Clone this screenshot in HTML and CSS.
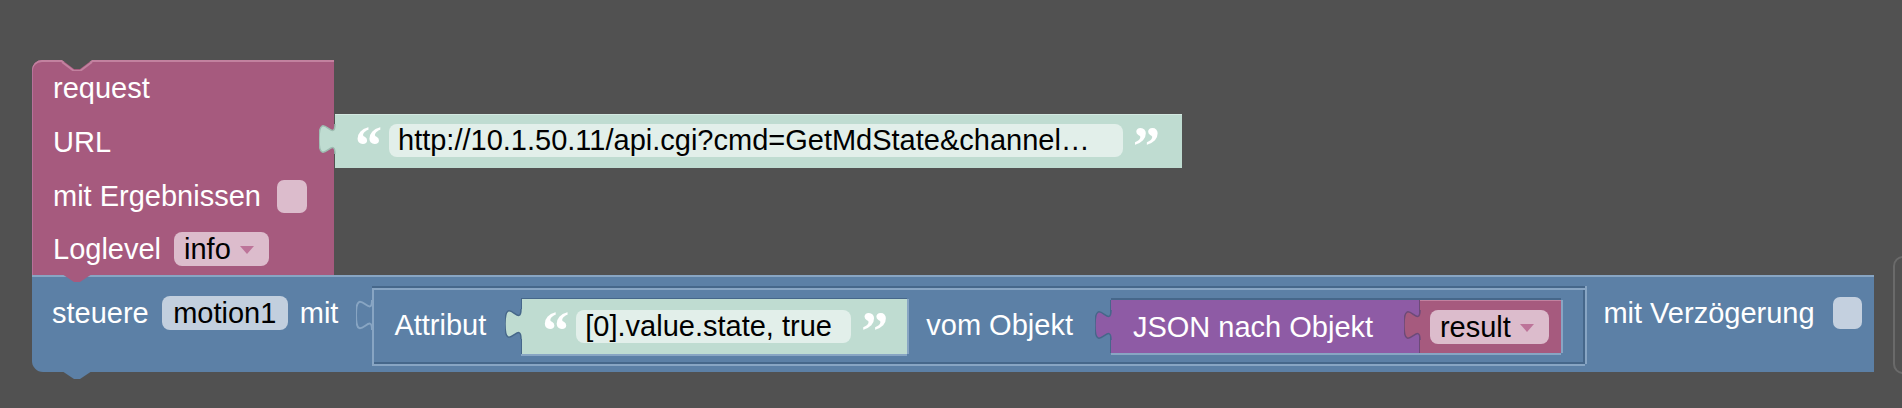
FILE: index.html
```html
<!DOCTYPE html>
<html>
<head>
<meta charset="utf-8">
<title>Blockly</title>
<link rel="stylesheet" href="styles.css">
</head>
<body>
<div class="ws">
  <div class="stack">
    <div class="toprow">
      <div class="blk req">
        <svg class="notch-top" width="32" height="11" viewBox="-1 -1 32 11"><polygon points="0,-1 12,8 18,8 30,-1" fill="#515151"/><polyline points="0,1 12,10 18,10 30,1" fill="none" stroke="#c2819f" stroke-width="2"/></svg>
        <div class="row"><span class="lbl">request</span></div>
        <div class="row"><span class="lbl">URL</span></div>
        <div class="row"><span class="lbl">mit Ergebnissen</span><span class="chk chk-m"></span></div>
        <div class="row last"><span class="lbl">Loglevel</span><span class="dd dd-m"><span>info</span><i class="tri tri-m"></i></span></div>
        <svg class="tab-bottom" width="30" height="9" viewBox="0 0 30 9"><polygon points="0,0 12,8 18,8 30,0" fill="#a65a7e"/></svg>
      </div>
      <div class="str url">
        <svg class="ptab" width="17" height="34" viewBox="0 -2 17 34"><path d="M17,0 L16,0 C16,20 0,-16 0,15 C0,46 16,10 16,30 L17,30 Z" fill="#bfdcd1"/><path d="M16,0 C16,20 0,-16 0,15 C0,46 16,10 16,30" fill="none" stroke="#9dbcb1" stroke-width="1.5"/></svg>
        <span class="q q-open">“</span>
        <span class="tf tf-url">http://10.1.50.11/api.cgi?cmd=GetMdState&amp;channel…</span>
        <span class="q q-close">”</span>
      </div>
    </div>
    <div class="blk ctl">
      <span class="lbl top">steuere</span>
      <span class="fld fld-b">motion1</span>
      <span class="lbl top mit">mit</span>
      <div class="attr">
        <svg class="ptab ptab-attr" width="17" height="34" viewBox="0 -2 17 34"><path d="M16,0 C16,20 0,-16 0,15 C0,46 16,10 16,30" fill="none" stroke="#88a5c3" stroke-width="2"/></svg>
        <span class="lbl in">Attribut</span>
        <div class="str sm">
          <svg class="ptab" width="17" height="34" viewBox="0 -2 17 34"><path d="M17,0 L16,0 C16,20 0,-16 0,15 C0,46 16,10 16,30 L17,30 Z" fill="#bfdcd1"/><path d="M16,0 C16,20 0,-16 0,15 C0,46 16,10 16,30" fill="none" stroke="#46678a" stroke-width="1.5"/></svg>
          <span class="q q-open">“</span>
          <span class="tf tf-sm">[0].value.state, true</span>
          <span class="q q-close">”</span>
        </div>
        <span class="lbl in vom">vom Objekt</span>
        <div class="json">
          <svg class="ptab" width="17" height="34" viewBox="0 -2 17 34"><path d="M17,0 L16,0 C16,20 0,-16 0,15 C0,46 16,10 16,30 L17,30 Z" fill="#8e5ba5"/><path d="M16,0 C16,20 0,-16 0,15 C0,46 16,10 16,30" fill="none" stroke="#46678a" stroke-width="1.5"/></svg>
          <span class="lbl jl">JSON nach Objekt</span>
          <div class="res">
            <svg class="ptab" width="17" height="34" viewBox="0 -2 17 34"><path d="M17,0 L16,0 C16,20 0,-16 0,15 C0,46 16,10 16,30 L17,30 Z" fill="#a65a7e"/><path d="M16,0 C16,20 0,-16 0,15 C0,46 16,10 16,30" fill="none" stroke="#6c4a78" stroke-width="1.5"/></svg>
            <span class="dd dd-r"><span>result</span><i class="tri tri-m"></i></span>
          </div>
        </div>
      </div>
      <span class="lbl top verz">mit Verzögerung</span>
      <span class="chk chk-b"></span>
      <svg class="tab-bottom" width="30" height="9" viewBox="0 0 30 9"><polygon points="0,0 12,8 18,8 30,0" fill="#5c80a6"/></svg>
    </div>
  </div>
  <div class="edge"></div>
</div>
</body>
</html>
```

FILE: styles.css
```css
html, body {
  margin: 0;
  padding: 0;
}
body {
  background: #515151;
  width: 1902px;
  height: 408px;
  overflow: hidden;
  font-family: "Liberation Sans", Arial, sans-serif;
  font-size: 29px;
  color: #ffffff;
}
.ws {
  position: relative;
  width: 1902px;
  height: 408px;
}
.stack {
  padding: 60px 0 0 32px;
}
.toprow {
  display: flex;
  align-items: flex-start;
}
.blk {
  position: relative;
}
.lbl {
  white-space: nowrap;
  line-height: 34px;
  height: 34px;
}

/* request block */
.req {
  z-index: 2;
  width: 302px;
  height: 215px;
  box-sizing: border-box;
  padding-top: 1px;
  background: #a65a7e;
  border-top-left-radius: 10px;
  box-shadow: inset 0 2px 0 #c2819f, inset 1px 0 0 #b7719a;
}
.notch-top {
  position: absolute;
  left: 29px;
  top: 0;
}
.tab-bottom {
  position: absolute;
  left: 30px;
  bottom: -8px;
}
.row {
  display: flex;
  align-items: center;
  height: 54px;
  padding-left: 21px;
}
.row.last {
  height: 52px;
}
.chk {
  display: block;
  border-radius: 7px;
}
.chk-m {
  width: 30px;
  height: 33px;
  margin-left: 16px;
  background: #dcbccc;
}
.dd {
  display: flex;
  align-items: center;
  height: 34px;
  box-sizing: border-box;
  border-radius: 8px;
  color: #000;
  line-height: 34px;
  padding-left: 10px;
  white-space: nowrap;
}
.dd-m {
  width: 95px;
  margin-left: 13px;
  background: #dcbccc;
}
.tri {
  display: block;
  width: 0;
  height: 0;
  border-left: 7.5px solid transparent;
  border-right: 7.5px solid transparent;
  border-top: 8px solid #bd7499;
  margin-left: 9px;
  margin-top: 2px;
}

/* string blocks */
.str {
  position: relative;
  display: flex;
  align-items: flex-start;
  box-sizing: border-box;
  background: #bfdcd1;
}
.url {
  z-index: 3;
  width: 847px;
  height: 54px;
  margin-left: 1px;
  margin-top: 54px;
  padding-left: 20px;
  box-shadow: inset 0 1px 0 #d3e8e0;
}
.ptab {
  position: absolute;
  left: -16px;
  top: 8px;
}
.q {
  display: block;
  font-family: "Liberation Serif", "Times New Roman", serif;
  font-weight: bold;
  font-size: 54px;
  line-height: 54px;
  height: 30px;
  color: #ffffff;
  margin-top: 5px;
}
.q-open {
  width: 23px;
}
.q-close {
  width: 25px;
  margin-left: 10px;
}
.tf {
  display: block;
  height: 33px;
  line-height: 33px;
  box-sizing: border-box;
  background: #e2efea;
  border-radius: 8px;
  color: #000;
  white-space: nowrap;
  overflow: hidden;
}
.tf-url {
  width: 734px;
  margin-left: 11px;
  margin-top: 10px;
  padding-left: 9px;
}

/* control block */
.ctl {
  display: flex;
  align-items: flex-start;
  width: 1842px;
  height: 97px;
  box-sizing: border-box;
  padding-left: 20px;
  background: #5c80a6;
  border-bottom-left-radius: 11px;
  box-shadow: inset 0 2px 0 #88a5c3;
}
.lbl.top {
  margin-top: 21px;
}
.fld {
  display: block;
  height: 34px;
  line-height: 34px;
  border-radius: 8px;
  color: #000;
  text-align: center;
  white-space: nowrap;
}
.fld-b {
  width: 126px;
  margin-left: 13px;
  margin-top: 21px;
  background: #c2cfde;
}
.mit {
  margin-left: 12px;
}
.attr {
  position: relative;
  display: flex;
  align-items: flex-start;
  width: 1213px;
  height: 78px;
  box-sizing: border-box;
  margin-left: 34px;
  margin-top: 11px;
  padding-left: 22px;
  background: #5c80a6;
  border-top: 2px solid #46678a;
  box-shadow: inset 0 2px 0 #88a5c3, inset 2px 0 0 #88a5c3, inset 0 -2px 0 #46678a, inset -2px 0 0 #46678a, 0 2px 0 #88a5c3, 2px 0 0 #88a5c3;
}
.ptab-attr {
  left: -16px;
  top: 10px;
}
.lbl.in {
  margin-top: 20px;
}
.sm {
  width: 386px;
  height: 55px;
  margin-left: 35px;
  margin-top: 11px;
  padding-left: 21px;
  box-shadow: 0 -1px 0 #46678a, 0 2px 0 #88a5c3, 2px 0 0 #88a5c3, inset 1px 0 0 #46678a;
}
.sm .q-close {
  width: 24px;
}
.tf-sm {
  width: 275px;
  margin-left: 11px;
  margin-top: 11px;
  padding-left: 9px;
}
.vom {
  margin-left: 19px;
}
.json {
  position: relative;
  display: flex;
  align-items: flex-start;
  width: 450px;
  height: 53px;
  box-sizing: border-box;
  margin-left: 38px;
  margin-top: 12px;
  padding-left: 22px;
  background: #8e5ba5;
  box-shadow: 0 -2px 0 #46678a, -1px 0 0 #46678a, 0 2px 0 #88a5c3, 2px 0 0 #88a5c3;
}
.jl {
  margin-top: 10px;
}
.res {
  position: relative;
  width: 142px;
  height: 53px;
  box-sizing: border-box;
  margin-left: auto;
  padding-left: 11px;
  padding-top: 10px;
  background: #a65a7e;
  box-shadow: inset 1px 0 0 #6c4a78, inset 0 1px 0 #c2819f;
}
.res .ptab {
  left: -15px;
}
.dd-r {
  width: 119px;
  background: #dcbccc;
}
.verz {
  margin-left: 18px;
}
.chk-b {
  width: 29px;
  height: 32px;
  margin-left: 18px;
  margin-top: 22px;
  background: #c4d0df;
}
.edge {
  position: absolute;
  left: 1893px;
  top: 256px;
  width: 20px;
  height: 118px;
  box-sizing: border-box;
  border: 2px solid #6a6a6a;
  border-radius: 12px;
}
```
